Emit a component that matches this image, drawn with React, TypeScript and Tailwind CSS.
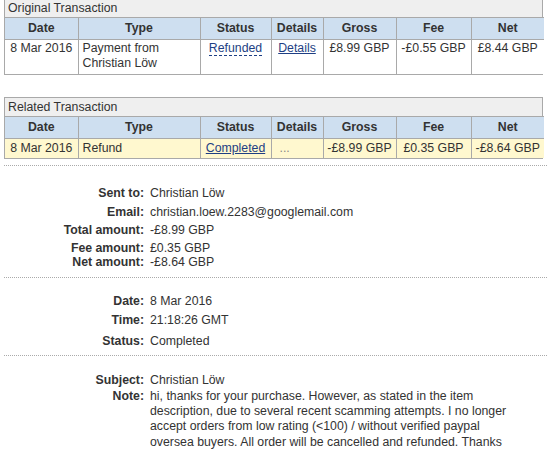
import React from "react";

const font = { fontFamily: '"Liberation Sans", Arial, sans-serif' };

function TxTable({
  title,
  row,
  yellow,
  topBorder,
}: {
  title: string;
  row: React.ReactNode[];
  yellow?: boolean;
  topBorder?: boolean;
}) {
  const heads = ["Date", "Type", "Status", "Details", "Gross", "Fee", "Net"];
  const widths = ["w-[73px]", "w-[122px]", "w-[71px]", "w-[52px]", "w-[73px]", "w-[75px]", "w-[73px]"];
  return (
    <div className={`mx-[4px] w-[539px] border border-[#a9a9a9] ${topBorder ? "" : "border-t-0"}`}>
      <div className={`bg-[#efefef] pl-[3px] leading-[15px] text-[#333] ${topBorder ? "h-[18px] pt-[2px]" : "h-[17px] pt-[1px]"}`}>
        {title}
      </div>
      <table className="w-full border-collapse text-[#333] table-fixed">
        <colgroup>
          {widths.map((w, i) => (
            <col key={i} className={w} />
          ))}
        </colgroup>
        <thead>
          <tr className="bg-[#cedff0] h-[22px]">
            {heads.map((h, i) => (
              <th
                key={h}
                className={`font-bold text-center border-t border-[#a9a9a9] p-0 ${i > 0 ? "border-l" : ""}`}
              >
                {h}
              </th>
            ))}
          </tr>
        </thead>
        <tbody>
          <tr className={yellow ? "bg-[#fff8cf]" : "bg-white"}>
            {row.map((c, i) => (
              <td
                key={i}
                className={`align-top border-t border-[#a9a9a9] leading-[15px] ${yellow ? "pt-[2px] pb-[2px]" : "pt-[1px] pb-[3px]"} ${i > 0 ? "border-l" : ""} ${i === 1 ? "text-left pl-[4px]" : "text-center px-[2px]"}`}
              >
                {c}
              </td>
            ))}
          </tr>
        </tbody>
      </table>
    </div>
  );
}

function Row({ label, children, cls = "" }: { label: string; children: React.ReactNode; cls?: string }) {
  return (
    <div className={`flex ${cls}`}>
      <div className="w-[144px] shrink-0 text-right font-bold text-[#333]">{label}</div>
      <div className="pl-[6px] flex-1 text-[#333]">{children}</div>
    </div>
  );
}

export default function App() {
  return (
    <div className="w-[551px] h-[457px] bg-white overflow-hidden text-[12.3px]" style={font}>
      <TxTable
        title="Original Transaction"
        row={[
          "8 Mar 2016",
          <span>
            Payment from
            <br />
            Christian Löw
          </span>,
          <span className="text-[#1e3f84] border-b border-dashed border-[#1e3f84]">Refunded</span>,
          <span className="text-[#1e3f84] underline">Details</span>,
          "£8.99 GBP",
          "-£0.55 GBP",
          "£8.44 GBP",
        ]}
      />
      <div className="h-[22px]" />
      <TxTable
        title="Related Transaction"
        yellow
        topBorder
        row={[
          "8 Mar 2016",
          "Refund",
          <span className="text-[#1e3f84] underline">Completed</span>,
          <span className="block text-left pl-[6px] text-[#888]">...</span>,
          "-£8.99 GBP",
          "£0.35 GBP",
          "-£8.64 GBP",
        ]}
      />
      <div className="h-[6px]" />
      <div className="mx-[4px] border-t border-dotted border-[#aaa]" />
      <div className="mt-[18px] leading-[18.5px]">
        <Row label="Sent to:">Christian Löw</Row>
        <Row label="Email:">christian.loew.2283@googlemail.com</Row>
        <Row label="Total amount:">-£8.99 GBP</Row>
        <Row label="Fee amount:" cls="leading-[15px] mt-[1px]">£0.35 GBP</Row>
        <Row label="Net amount:" cls="leading-[13px]">-£8.64 GBP</Row>
      </div>
      <div className="mt-[8px] mx-[4px] border-t border-dotted border-[#aaa]" />
      <div className="mt-[14px] leading-[19px]">
        <Row label="Date:">8 Mar 2016</Row>
        <Row label="Time:">21:18:26 GMT</Row>
        <Row label="Status:" cls="mt-[2px]">Completed</Row>
      </div>
      <div className="mt-[4px] mx-[4px] border-t border-dotted border-[#aaa]" />
      <div className="mt-[15px]">
        <Row label="Subject:" cls="leading-[18px]">Christian Löw</Row>
        <Row label="Note:" cls="leading-[15.4px]">
          <div className="whitespace-nowrap">
            hi, thanks for your purchase. However, as stated in the item
            <br />
            description, due to several recent scamming attempts. I no longer
            <br />
            accept orders from low rating (&lt;100) / without verified paypal
            <br />
            oversea buyers. All order will be cancelled and refunded. Thanks
          </div>
        </Row>
      </div>
    </div>
  );
}
